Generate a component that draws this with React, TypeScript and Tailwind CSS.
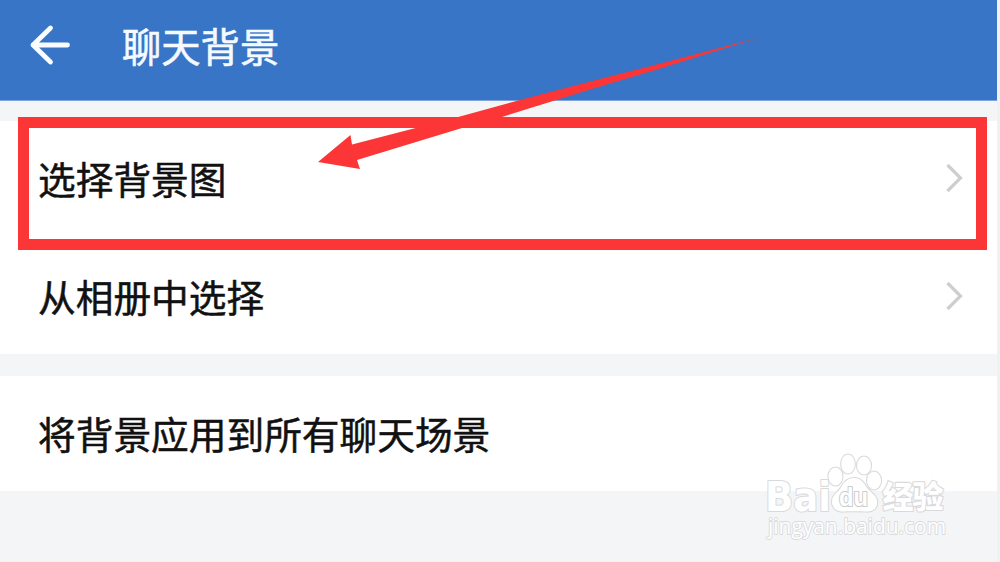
import React from 'react';

interface SettingRowProps {
  label: string;
  className?: string;
  hasArrow?: boolean;
}

const ChevronIcon = () => (
  <svg className="w-[20px] h-[32px] mt-[-2px]" viewBox="0 0 20 32" fill="none">
    <path d="M3.5 3L16.5 16L3.5 29" stroke="#cecece" strokeWidth="3.2" />
  </svg>
);

const SettingRow = ({ label, className = '', hasArrow = false }: SettingRowProps) => (
  <div className={`flex items-center justify-between bg-white pl-[38px] pr-[33px] ${className}`}>
    <span className="mt-[4px] text-[37.7px] leading-[56px] text-[#111111] whitespace-nowrap [-webkit-text-stroke:0.5px_#111111]">
      {label}
    </span>
    {hasArrow && <ChevronIcon />}
  </div>
);

const Header = () => (
  <div className="flex items-center h-[101px] bg-[#3875c6] border-b border-[#7fa3dc] pl-[28px] pb-[4px]">
    <svg className="w-[44px] h-[44px] mt-[-6px]" viewBox="0 0 44 44" fill="none">
      <path d="M22.5 5L5 22L22.5 39M5 22H39.5" stroke="#fafdff" strokeWidth="4.8" strokeLinecap="round" strokeLinejoin="round" />
    </svg>
    <h1 className="ml-[50px] text-[39.3px] leading-[58px] text-[#f4faff] whitespace-nowrap [-webkit-text-stroke:0.6px_#f4faff]">
      聊天背景
    </h1>
  </div>
);

// Red frame and arrow pointing at the first row
const Highlight = () => (
  <>
    <div className="absolute left-[18px] top-[117px] w-[969px] h-[133px] border-[11px] border-[#fc3636]" />
    <svg className="absolute left-0 top-0 w-[1000px] h-[200px]" viewBox="0 0 1000 200">
      <path
        d="M759 37.5L657 64.5L600 79L520 100L460 116.5L352 144.5L350.5 135L318 162L360 169L357 160L462 128L502 117L553 101L600 86.5L657 69.5Z"
        fill="#fc3636"
      />
    </svg>
  </>
);

const Watermark = () => (
  <svg
    className="absolute left-[760px] top-[448px] w-[200px] h-[104px]"
    viewBox="0 0 200 104"
    fill="#ffffff"
    stroke="#d9dadc"
    strokeWidth="2.2"
    strokeLinejoin="round"
    paintOrder="stroke"
  >
    <text x="5" y="62.5" fontSize="41" fontWeight="700" textLength="66" lengthAdjust="spacingAndGlyphs" fontFamily="DejaVu Sans, sans-serif">Bai</text>
    <ellipse cx="75.5" cy="28.5" rx="7" ry="9" />
    <ellipse cx="88" cy="16" rx="6.8" ry="9.5" />
    <ellipse cx="104" cy="17.5" rx="7" ry="9" />
    <ellipse cx="114" cy="32.5" rx="7" ry="9" />
    <path d="M94 30C86 30 83 36 80 41C77 45 72 47 72 54C72 60 77 64 83 63.5C90 63 98 63 106 63.5C113 64 118 60 117 53C116.5 47 111 45 107 40C104 35 101 30 94 30Z" />
    <text x="79" y="58" fontSize="26" textLength="29" lengthAdjust="spacingAndGlyphs" stroke="#cbccce" fontWeight="700" fontFamily="Liberation Sans, sans-serif">du</text>
    <text x="122.5" y="60" fontSize="31" fontWeight="900" textLength="61" fontFamily="Noto Sans CJK SC, sans-serif">经验</text>
    <text x="8" y="86" fontSize="21.5" strokeWidth="1.8" textLength="178" lengthAdjust="spacingAndGlyphs" fontFamily="Open Sans, sans-serif">jingyan.baidu.com</text>
  </svg>
);

const App = () => {
  return (
    <div className="relative w-[1000px] h-[562px] overflow-hidden bg-[#f1f1f1] font-['Liberation_Sans','Noto_Sans_CJK_SC',sans-serif]">
      <div className="flex flex-col w-[997px] h-[561px] bg-[#f3f5f7]">
        <Header />
        <div className="mt-[20px]">
          <SettingRow label="选择背景图" className="h-[115px] pt-[1px]" hasArrow />
          <SettingRow label="从相册中选择" className="h-[118px] pt-[4px]" hasArrow />
        </div>
        <SettingRow label="将背景应用到所有聊天场景" className="mt-[22px] h-[115px]" />
      </div>
      <Highlight />
      <Watermark />
    </div>
  );
};

export default App;
